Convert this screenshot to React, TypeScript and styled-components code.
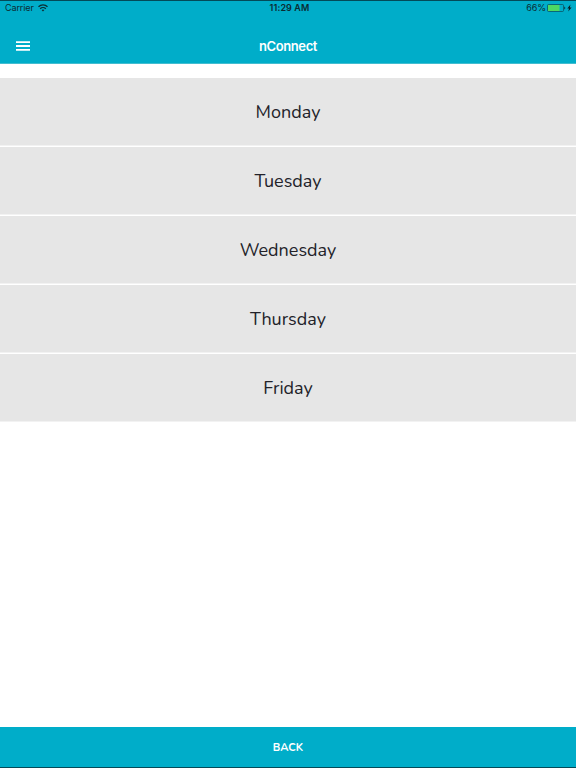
import React from "react";
import styled, { createGlobalStyle } from "styled-components";

const GlobalStyle = createGlobalStyle`
  * { box-sizing: border-box; }
  body { margin: 0; background: #fff; }
`;

const Screen = styled.div`
  display: flex;
  flex-direction: column;
  width: 100%;
  height: 768px;
  overflow: hidden;
  background: #ffffff;
  font-family: Nunito, "Open Sans", sans-serif;
`;

const Header = styled.header`
  height: 64px;
  flex: none;
  background: #00adc9;
  border-top: 1px solid #034a58;
  border-bottom: 1px solid #43bdd0;
`;

const StatusBar = styled.div`
  display: grid;
  grid-template-columns: 1fr auto 1fr;
  align-items: center;
  height: 14px;
  padding: 0 4px 0 5px;
  font: 400 9px/14px Inter, sans-serif;
  color: #0b2b32;
`;

const StatusGroup = styled.div<{ $end?: boolean }>`
  display: flex;
  align-items: center;
  gap: ${(p) => (p.$end ? "1px" : "4px")};
  justify-content: ${(p) => (p.$end ? "flex-end" : "flex-start")};
`;

const StatusText = styled.span`
  letter-spacing: -0.1px;
`;

const Clock = styled.span`
  padding-left: 2px;
  font-weight: 600;
  letter-spacing: 0.1px;
`;

const NavBar = styled.nav`
  display: grid;
  grid-template-columns: 1fr auto 1fr;
  align-items: center;
  height: 44px;
  margin-top: 9px;
  padding: 0 16px;
`;

const MenuButton = styled.button`
  display: flex;
  width: 14px;
  padding: 0;
  border: 0;
  background: none;
`;

const Title = styled.h1`
  margin: 0;
  font: 600 13px/20px Inter, sans-serif;
  letter-spacing: -0.4px;
  color: #fff;
`;

const DayList = styled.main`
  display: flex;
  flex-direction: column;
  flex: 1;
  padding-top: 14px;
`;

const DayButton = styled.button`
  height: 69px;
  flex: none;
  padding: 0 0 1px;
  border: 0;
  border-bottom: 1px solid #fff;
  box-shadow: inset 0 -1px #f2f2f2;
  background: #e6e6e6;
  color: #222229;
  font: 400 18px/68px Nunito, "Open Sans", sans-serif;
`;

const BackButton = styled.button`
  height: 41px;
  flex: none;
  padding: 1px 0 0;
  border: 0;
  border-bottom: 1px solid #034a58;
  background: #00adc9;
  color: #fff;
  font: 700 11px/39px Nunito, "Open Sans", sans-serif;
`;

const days = ["Monday", "Tuesday", "Wednesday", "Thursday", "Friday"];

function WifiIcon() {
  return (
    <svg width="10" height="8" viewBox="0 0 10 8" fill="none" stroke="#0b2b32" strokeWidth="1.3">
      <path d="M.5 2.8a6.4 6.4 0 0 1 9 0M2.2 4.7a4 4 0 0 1 5.6 0" />
      <path d="M5 7.6 3.6 6.1a2 2 0 0 1 2.8 0Z" fill="#0b2b32" stroke="none" />
    </svg>
  );
}

function BatteryIcon() {
  return (
    <svg width="25" height="8" viewBox="0 0 25 8">
      <rect x=".5" y=".5" width="16" height="7" rx="1" fill="none" stroke="#0b4b56" strokeWidth=".7" />
      <rect x="1" y="1" width="11.5" height="6" fill="#4cd964" />
      <path d="M17.3 2.5q2 1.5 0 3Z" fill="#0b2b32" />
      <path d="m23.5.5-3.2 3.9h1.8l-.9 3.1 3.4-4.1h-1.8Z" fill="#071c21" />
    </svg>
  );
}

export default function App() {
  return (
    <Screen>
      <GlobalStyle />
      <Header>
        <StatusBar>
          <StatusGroup>
            <StatusText>Carrier</StatusText>
            <WifiIcon />
          </StatusGroup>
          <Clock>11:29 AM</Clock>
          <StatusGroup $end>
            <StatusText>66%</StatusText>
            <BatteryIcon />
          </StatusGroup>
        </StatusBar>
        <NavBar>
          <MenuButton aria-label="Menu">
            <svg width="14" height="10" fill="#fff">
              <path d="M0 .2h14v1.8H0zM0 4.1h14v1.8H0zM0 8h14v1.8H0z" />
            </svg>
          </MenuButton>
          <Title>nConnect</Title>
        </NavBar>
      </Header>
      <DayList>
        {days.map((day) => (
          <DayButton key={day}>{day}</DayButton>
        ))}
      </DayList>
      <BackButton>BACK</BackButton>
    </Screen>
  );
}
